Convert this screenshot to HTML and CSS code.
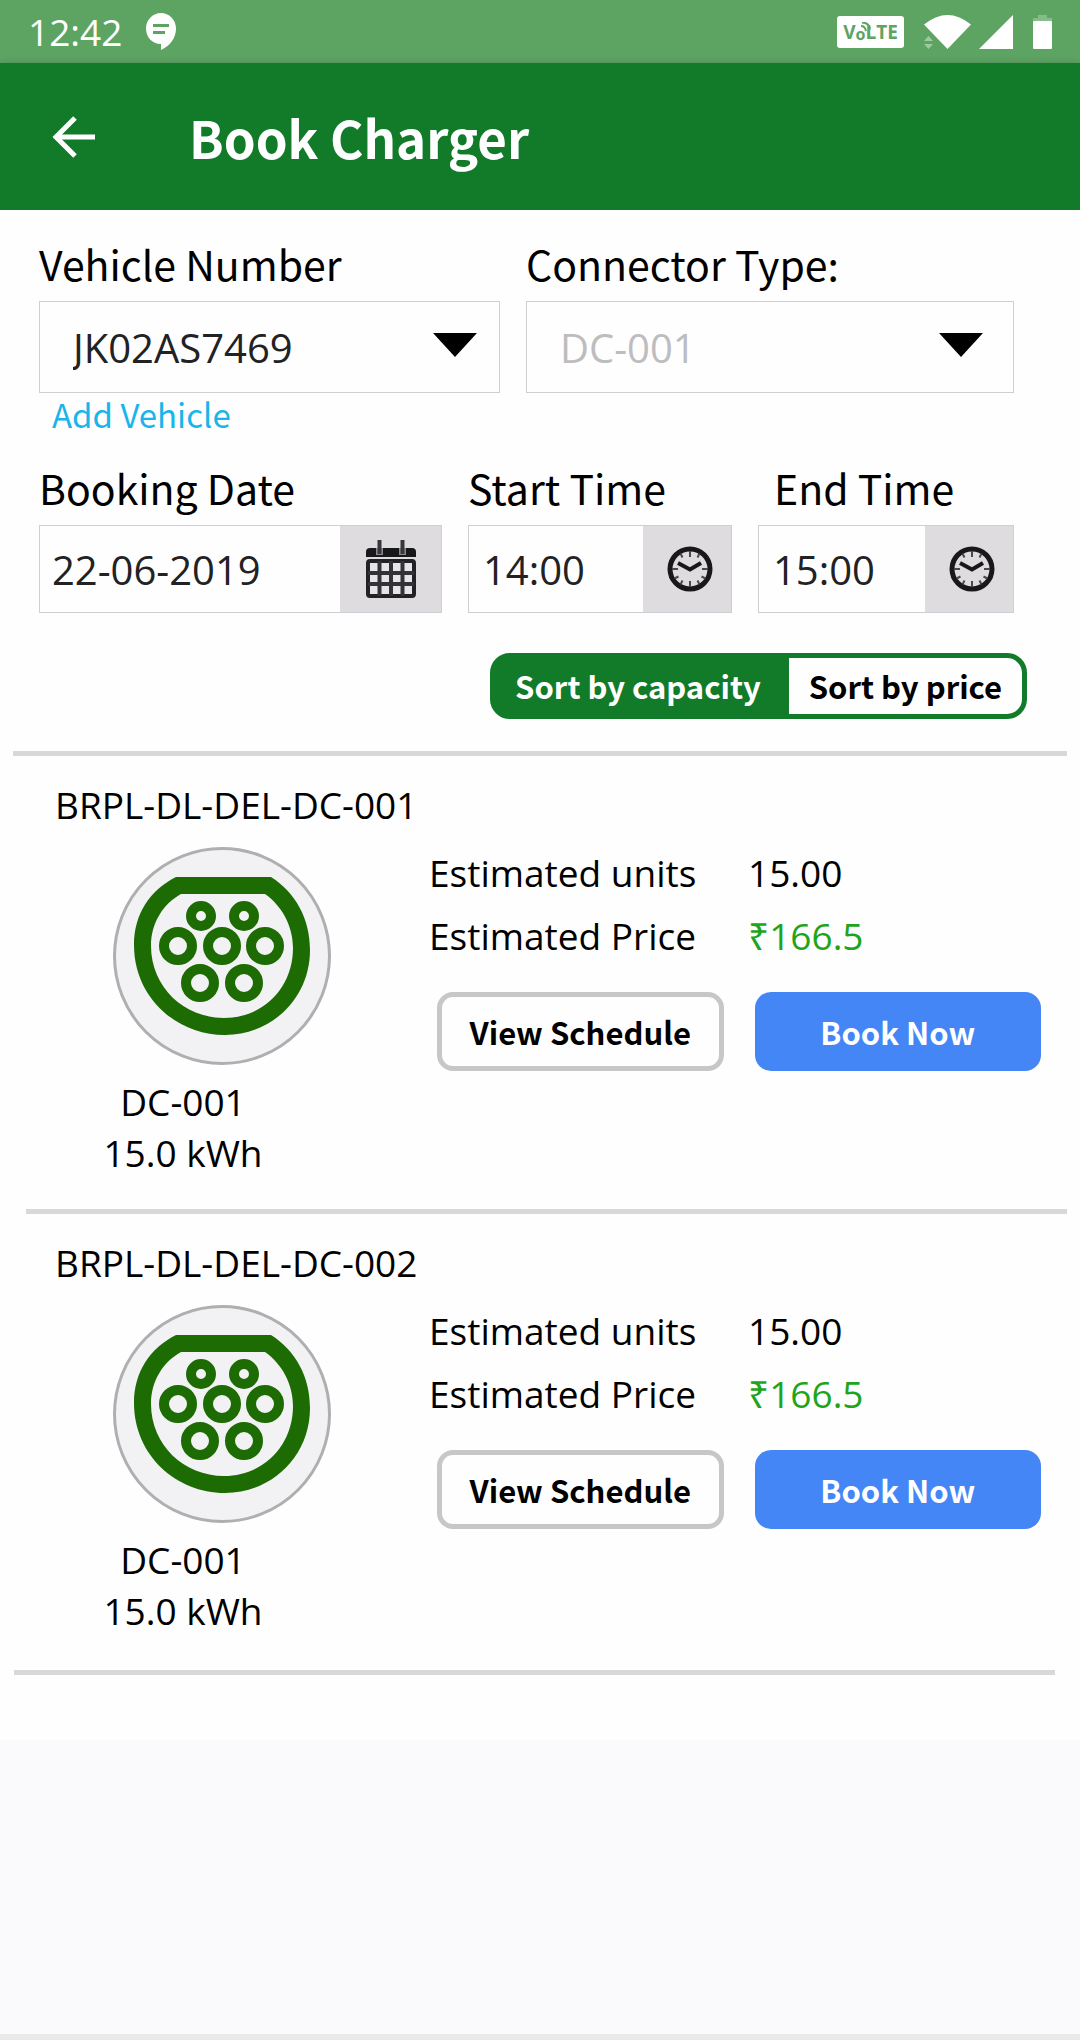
FILE: index.html
```html
<!DOCTYPE html>
<html lang="en">
<head>
<meta charset="utf-8">
<meta name="viewport" content="width=device-width, initial-scale=1">
<title>Book Charger</title>
<link rel="stylesheet" href="styles.css">
</head>
<body>
<svg class="defs" width="0" height="0" aria-hidden="true">
  <symbol id="clock" viewBox="0 0 46 46">
    <circle cx="23" cy="23" r="20" fill="none" stroke="#18171a" stroke-width="5"/>
    <path d="M23 5v6M23 35v6M5 23h6M35 23h6M13.500 7.500l2 4M32.500 7.500l-2 4M13.500 38.500l2-4M32.500 38.500l-2-4M7.500 32.500l4-2M38.500 32.500l-4-2" stroke="#4a494c" stroke-width="2"/>
    <path d="M11 17l12 6.500 11-6.500" fill="none" stroke="#18171a" stroke-width="4"/>
  </symbol>
  <symbol id="caret" viewBox="0 0 44 24"><path d="M0 0h44L22 24z"/></symbol>
  <symbol id="plug" viewBox="0 0 218 218">
    <circle cx="109" cy="109" r="107.500" fill="#f2f1f3" stroke="#b0aeb1" stroke-width="3"/>
    <path fill="#1d6b03" fill-rule="evenodd" d="M63 30H158C183 46 197 72 197 103C197 152 158 188 112 188C63 188 21 150 21 98C21 67 37 43 63 30ZM68 47H152C169 59 180 79 180 101C180 141 150 171 111 171C71 171 38 140 38 99C38 76 50 57 68 47Z"/>
    <g fill="none" stroke="#1d6b03" stroke-width="10">
      <circle cx="88" cy="69" r="10"/><circle cx="131" cy="69" r="10"/>
      <circle cx="65" cy="99" r="14"/><circle cx="109" cy="99" r="14"/><circle cx="152" cy="99" r="14"/><circle cx="87" cy="136" r="14"/><circle cx="131" cy="136" r="14"/>
    </g>
  </symbol>
</svg>

<div class="status">
  <time class="status-time">12:42</time>
  <svg class="status-chat" width="30" height="37" viewBox="0 0 30 37"><path d="M15 0C23 0 30 6.500 30 15.500C30 25 24 33 15 37V31C6 31 0 24 0 15.500C0 6.500 7 0 15 0Z" fill="#fff"/><path d="M7 12.500h16M7 19.500h12" stroke="#5da463" stroke-width="3"/></svg>
  <span class="volte">V<span class="volte-o">o<svg class="volte-waves" width="10" height="10" viewBox="0 0 10 10"><path d="M0 4q4 0 5 5M1 0.500q7 0 8 7" fill="none" stroke="#5da463" stroke-width="2"/></svg></span>LTE</span>
  <svg class="status-wifi" width="47" height="34" viewBox="0 0 47 34"><path d="M0 9.500Q23.500-9.500 47 9.500L23.500 34Z" fill="#fff"/><path d="M0 26l4.500-5 4.500 5zM0 29h9l-4.500 5z" fill="#9ccb9f"/></svg>
  <svg class="status-signal" width="34" height="34" viewBox="0 0 34 34"><path d="M34 0V34H0Z" fill="#fff"/></svg>
  <svg width="19" height="34" viewBox="0 0 19 34"><path d="M5 0h9v3h5v3H0V3h5z" fill="#86bb8a"/><rect y="6" width="19" height="28" rx="1" fill="#fff"/></svg>
</div>

<header class="appbar">
  <button class="back" type="button" aria-label="Back"><svg width="43" height="42" viewBox="0 0 43 42"><path d="M23 2L4 21l19 19M4 21h39" fill="none" stroke="#fff" stroke-width="5"/></svg></button>
  <h1 class="title">Book Charger</h1>
</header>

<main class="page">
  <form class="form">
    <div class="row row-vehicle">
      <div class="field">
        <label class="label" for="vehicle">Vehicle Number</label>
        <div class="select-box">
          <select class="select" id="vehicle"><option>JK02AS7469</option></select>
          <svg class="caret" width="44" height="24"><use href="#caret"/></svg>
        </div>
        <a class="add" href="#add">Add Vehicle</a>
      </div>
      <div class="field">
        <label class="label" for="connector">Connector Type:</label>
        <div class="select-box">
          <select class="select" id="connector" disabled><option>DC-001</option></select>
          <svg class="caret caret-inset" width="44" height="24"><use href="#caret"/></svg>
        </div>
      </div>
    </div>
    <div class="row row-time">
      <div class="field">
        <label class="label" for="date">Booking Date</label>
        <div class="picker">
          <input class="input" id="date" type="text" value="22-06-2019">
          <button class="pick pick-date" type="button" aria-label="Choose date"><svg width="50" height="58" viewBox="0 0 50 58"><path d="M4 8H46Q50 8 50 12V17H0V12Q0 8 4 8Z" fill="#18171a"/><path d="M13.500 8v7M36.500 8v7" stroke="#8a888c" stroke-width="7"/><path d="M13.500 0v14M36.500 0v14" stroke="#37363a" stroke-width="4"/><rect x="2" y="21" width="46" height="35" rx="2" fill="#e6e4e7" stroke="#222124" stroke-width="4"/><path d="M13.500 21v35M25 21v35M36.500 21v35M2 33h46M2 44h46" stroke="#333236" stroke-width="4"/></svg></button>
        </div>
      </div>
      <div class="field">
        <label class="label" for="start">Start Time</label>
        <div class="picker">
          <input class="input input-time" id="start" type="text" value="14:00">
          <button class="pick pick-time" type="button" aria-label="Choose start time"><svg width="46" height="46"><use href="#clock"/></svg></button>
        </div>
      </div>
      <div class="field">
        <label class="label label-end" for="end">End Time</label>
        <div class="picker">
          <input class="input input-time" id="end" type="text" value="15:00">
          <button class="pick pick-time" type="button" aria-label="Choose end time"><svg width="46" height="46"><use href="#clock"/></svg></button>
        </div>
      </div>
    </div>
    <div class="sort">
      <button class="sort-btn sort-on" type="button">Sort by capacity</button>
      <button class="sort-btn" type="button">Sort by price</button>
    </div>
  </form>

  <hr class="rule">
  <article class="charger">
    <h2 class="name">BRPL-DL-DEL-DC-001</h2>
    <div class="detail">
      <div class="plug"><svg class="plug-icon" width="218" height="218"><use href="#plug"/></svg><p class="spec">DC-001<br>15.0 kWh</p></div>
      <div class="info">
        <dl class="estimate"><dt>Estimated units</dt><dd>15.00</dd><dt>Estimated Price</dt><dd class="price">₹166.5</dd></dl>
        <div class="actions"><button class="btn btn-view" type="button">View Schedule</button><button class="btn btn-book" type="button">Book Now</button></div>
      </div>
    </div>
  </article>
  <hr class="rule rule-inner">
  <article class="charger">
    <h2 class="name">BRPL-DL-DEL-DC-002</h2>
    <div class="detail">
      <div class="plug"><svg class="plug-icon" width="218" height="218"><use href="#plug"/></svg><p class="spec">DC-001<br>15.0 kWh</p></div>
      <div class="info">
        <dl class="estimate"><dt>Estimated units</dt><dd>15.00</dd><dt>Estimated Price</dt><dd class="price">₹166.5</dd></dl>
        <div class="actions"><button class="btn btn-view" type="button">View Schedule</button><button class="btn btn-book" type="button">Book Now</button></div>
      </div>
    </div>
  </article>
  <hr class="rule rule-last">
</main>
<footer class="navbar"></footer>
</body>
</html>
```
FILE: styles.css
```css
* { box-sizing: border-box; }
body {
  margin: 0;
  min-height: 100vh;
  display: flex;
  flex-direction: column;
  background: #faf9fc;
  color: #000;
  font-family: "Open Sans", "Noto Sans", sans-serif;
  font-size: 37px;
}
button, input, select { font: inherit; color: inherit; margin: 0; border: 0; padding: 0; }
button { cursor: pointer; }
svg { display: block; flex: none; }
.defs { position: absolute; }

.status {
  display: flex;
  align-items: center;
  height: 63px;
  padding: 0 28px;
  background: #5da463;
  color: #fff;
}
.status-chat { margin-left: 24px; }
.volte {
  display: flex;
  align-items: center;
  justify-content: center;
  width: 67px;
  height: 32px;
  margin-left: auto;
  border-radius: 3px;
  background: #fff;
  color: #5da463;
  font-size: 19px;
  font-weight: 700;
}
.volte-o { position: relative; font-size: 16px; padding-top: 4px; }
.volte-waves { position: absolute; left: 5px; top: 3px; }
.status-wifi { margin-left: 20px; }
.status-signal { margin: 0 20px 0 8px; }

.appbar {
  display: flex;
  align-items: center;
  height: 147px;
  padding: 0 52px;
  gap: 94px;
  background: #127b2a;
  color: #fff;
  box-shadow: 0 1px 8px #0003;
}
.back { background: none; }
.title {
  margin: 0;
  font: 700 51px/72px "Noto Sans CJK SC", sans-serif;
}

.page { background: #fefefe; padding-bottom: 65px; }
.form { padding: 29px 66px 32px 39px; }
.row { display: grid; gap: 26px; }
.row-vehicle { grid-template-columns: 461fr 488fr; margin-bottom: 27px; }
.row-time { grid-template-columns: 403fr 264fr 256fr; }
.field { display: flex; flex-direction: column; min-width: 0; }
.label {
  margin-bottom: 14px;
  font: 400 41px/48px "Noto Sans CJK SC", sans-serif;
  white-space: nowrap;
}
.label-end { padding-left: 16px; }
.select-box { display: grid; align-items: center; border: 1px solid #d0ced2; }
.select-box > * { grid-area: 1 / 1; }
.select {
  appearance: none;
  width: 100%;
  height: 90px;
  padding: 0 80px 0 33px;
  background: none;
  color: #222124;
  font-size: 40px;
  opacity: 1;
}
.select:disabled { color: #bdbcbf; }
.caret { justify-self: end; margin: 0 22px 4px 0; pointer-events: none; }
.caret-inset { margin-right: 30px; }
.add {
  align-self: flex-start;
  margin-left: 13px;
  color: #19b5ea;
  font: 400 33px/43px "Noto Sans CJK SC", sans-serif;
  text-decoration: none;
}
.picker { display: flex; height: 88px; border: 1px solid #d0ced2; }
.input {
  flex: 1;
  min-width: 0;
  padding: 0 0 0 12px;
  background: none;
  color: #222124;
  font-size: 40px;
}
.input-time { padding-left: 14px; }
.pick {
  display: grid;
  place-items: center;
  flex: none;
  background: #dfdce0;
}
.pick-date { width: 101px; }
.pick-time { width: 88px; padding-left: 5px; }

.sort {
  display: flex;
  width: fit-content;
  height: 66px;
  margin: 40px -13px 0 auto;
  border: 5px solid #127b2a;
  border-radius: 20px;
  background: #127b2a;
}
.sort-btn {
  padding: 0 20px;
  border-radius: 0 15px 15px 0;
  background: #fefefe;
  font: 700 31px/48px "Noto Sans CJK SC", sans-serif;
}
.sort-on { background: none; color: #fff; padding-right: 28px; }

.rule { height: 5px; margin: 0 13px; border: 0; background: #d9d7da; }
.rule-inner { margin-left: 26px; }
.rule-last { margin: 3px 25px 0 14px; }

.charger { padding: 25px 39px 31px 55px; }
.name { margin: 0; font-size: inherit; font-weight: 400; line-height: 48px; }
.detail { display: flex; }
.plug { flex: none; width: 374px; padding: 18px 0 0 48px; }
.plug-icon { margin-left: 10px; }
.spec { width: 160px; margin: 11px 0 0; line-height: 51px; text-align: center; white-space: nowrap; }
.info { flex: 1; padding-top: 12px; }
.estimate {
  display: grid;
  grid-template-columns: 319px 1fr;
  margin: 0 0 25px;
  line-height: 63px;
}
.estimate dd { margin: 0; }
.estimate .price { color: #1ea51c; }
.actions { display: grid; grid-template-columns: 1fr 1fr; gap: 31px; padding-left: 8px; }
.btn {
  height: 79px;
  border-radius: 16px;
  font: 700 31px/48px "Noto Sans CJK SC", sans-serif;
}
.btn-view { border: 5px solid #c9c6c9; background: #fefefe; }
.btn-book { background: #4486f6; color: #fff; }

.navbar { height: 6px; margin-top: auto; background: #e9e9ea; }
```
